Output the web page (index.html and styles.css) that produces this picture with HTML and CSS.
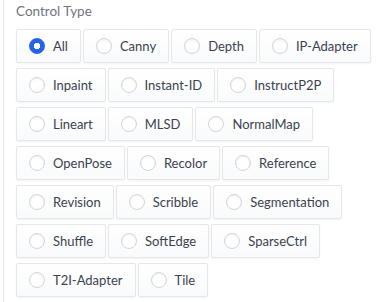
FILE: index.html
```html
<!DOCTYPE html>
<html>
<head>
    <title>Control Type</title>
    <link rel="stylesheet" href="styles.css">
</head>
<body>
    <div class="block">
        <span class="block-label">Control Type</span>
        <div class="wrap">
            <label class="option"><input type="radio" name="control-type" checked><span>All</span></label>
            <label class="option"><input type="radio" name="control-type"><span>Canny</span></label>
            <label class="option"><input type="radio" name="control-type"><span>Depth</span></label>
            <label class="option"><input type="radio" name="control-type"><span>IP-Adapter</span></label>
            <label class="option"><input type="radio" name="control-type"><span>Inpaint</span></label>
            <label class="option"><input type="radio" name="control-type"><span>Instant-ID</span></label>
            <label class="option"><input type="radio" name="control-type"><span>InstructP2P</span></label>
            <label class="option"><input type="radio" name="control-type"><span>Lineart</span></label>
            <label class="option"><input type="radio" name="control-type"><span>MLSD</span></label>
            <label class="option"><input type="radio" name="control-type"><span>NormalMap</span></label>
            <label class="option"><input type="radio" name="control-type"><span>OpenPose</span></label>
            <label class="option"><input type="radio" name="control-type"><span>Recolor</span></label>
            <label class="option"><input type="radio" name="control-type"><span>Reference</span></label>
            <label class="option"><input type="radio" name="control-type"><span>Revision</span></label>
            <label class="option"><input type="radio" name="control-type"><span>Scribble</span></label>
            <label class="option"><input type="radio" name="control-type"><span>Segmentation</span></label>
            <label class="option"><input type="radio" name="control-type"><span>Shuffle</span></label>
            <label class="option"><input type="radio" name="control-type"><span>SoftEdge</span></label>
            <label class="option"><input type="radio" name="control-type"><span>SparseCtrl</span></label>
            <label class="option"><input type="radio" name="control-type"><span>T2I-Adapter</span></label>
            <label class="option"><input type="radio" name="control-type"><span>Tile</span></label>
        </div>
    </div>
</body>
</html>
```

FILE: styles.css
```css
body {
    margin: 0;
    background: #fff;
    font-family: "Lato", "Liberation Sans", sans-serif;
    font-size: 13px;
}
.block {
    margin-left: 3px;
    border-left: 1px solid #e5e7eb;
    padding: 1px 4px 0 12px;
    min-height: 301px;
}
.block-label {
    display: block;
    color: #71757e;
    font-size: 13.5px;
    line-height: 20px;
    margin-bottom: 8px;
}
.wrap {
    display: flex;
    flex-wrap: wrap;
    gap: 5px 2px;
}
.option {
    display: flex;
    align-items: center;
    padding: 6px 12px;
    line-height: 20px;
    color: #3b4250;
    background: linear-gradient(to top, #f9fafb, #fff);
    border: 1px solid #e5e7eb;
    border-radius: 2px;
    box-shadow: 0 1px 2px rgba(0, 0, 0, 0.05);
    cursor: pointer;
}
.option input {
    appearance: none;
    -webkit-appearance: none;
    margin: 0 8px 0 0;
    width: 16px;
    height: 16px;
    border-radius: 50%;
    border: 1px solid #d1d5db;
    background: #fff;
    box-shadow: inset 0 1px 2px rgba(0, 0, 0, 0.06);
}
.option input:checked {
    border-color: #2563eb;
    background: radial-gradient(circle, #fff 0 3px, #2563eb 3.5px);
    box-shadow: none;
}
```
